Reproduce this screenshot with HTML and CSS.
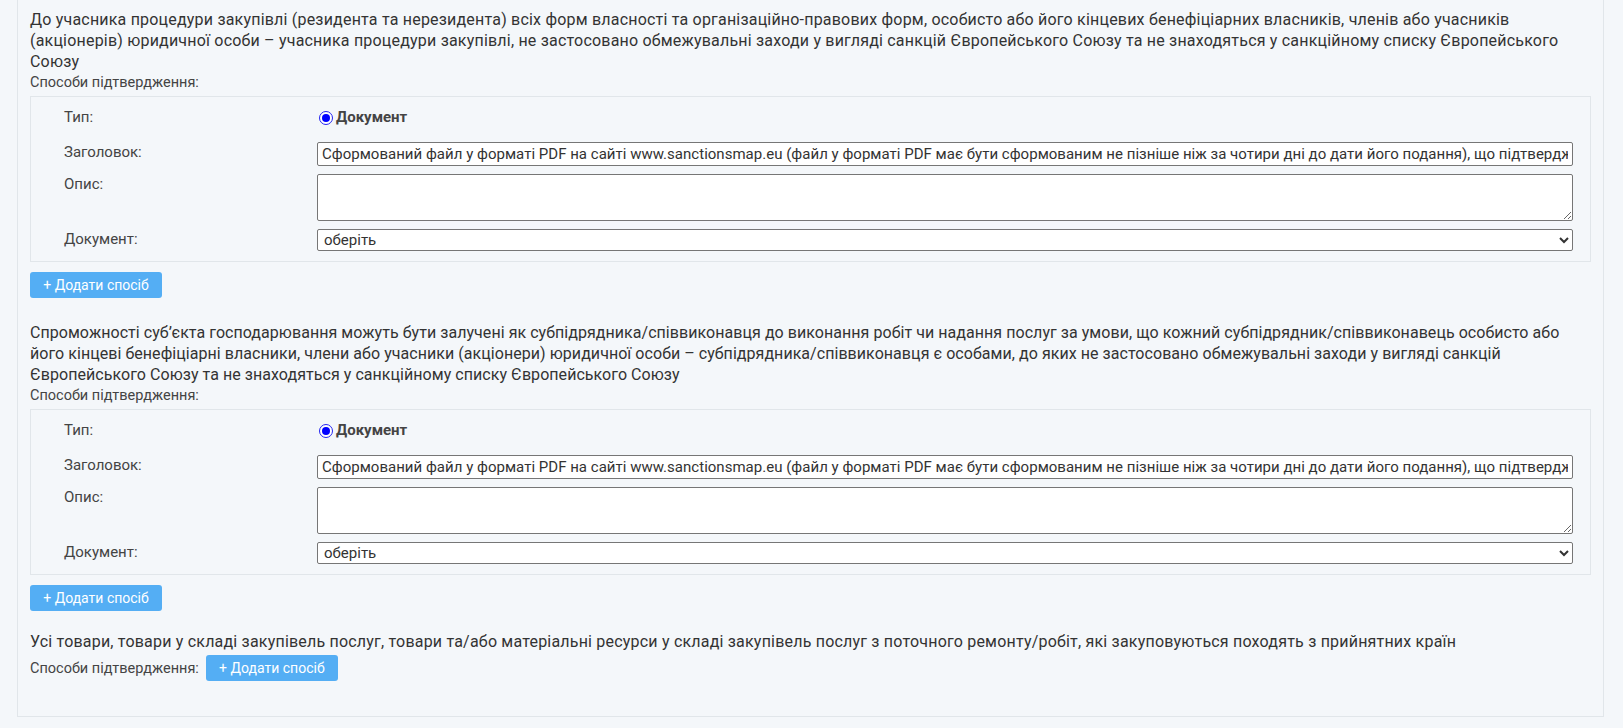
FILE: index.html
```html
<!DOCTYPE html>
<html lang="uk">
<head>
<meta charset="utf-8">
<title>Критерії</title>
<link rel="stylesheet" href="styles.css">
</head>
<body>
<div class="page">
  <div class="panel">
    <section class="criterion">
      <p class="crit-text">До учасника процедури закупівлі (резидента та нерезидента) всіх форм власності та організаційно-правових форм, особисто або його кінцевих бенефіціарних власників, членів або учасників (акціонерів) юридичної особи – учасника процедури закупівлі, не застосовано обмежувальні заходи у вигляді санкцій Європейського Союзу та не знаходяться у санкційному списку Європейського Союзу</p>
      <div class="methods-label">Способи підтвердження:</div>
      <div class="method">
        <div class="row row-type"><span class="lbl">Тип:</span><span class="radio"><span class="radio-mark"></span>Документ</span></div>
        <div class="row"><span class="lbl">Заголовок:</span><input class="field" type="text" value="Сформований файл у форматі PDF на сайті www.sanctionsmap.eu (файл у форматі PDF має бути сформованим не пізніше ніж за чотири дні до дати його подання), що підтверджує відсутність застосування санкцій"></div>
        <div class="row"><span class="lbl">Опис:</span><textarea class="field area"></textarea></div>
        <div class="row"><span class="lbl">Документ:</span><select class="field sel"><option>оберіть</option></select></div>
      </div>
      <button class="add-btn" type="button">+ Додати спосіб</button>
    </section>

    <section class="criterion criterion--tight">
      <p class="crit-text crit-text--tight">Спроможності суб’єкта господарювання можуть бути залучені як субпідрядника/співвиконавця до виконання робіт чи надання послуг за умови, що кожний субпідрядник/співвиконавець особисто або його кінцеві бенефіціарні власники, члени або учасники (акціонери) юридичної особи – субпідрядника/співвиконавця є особами, до яких не застосовано обмежувальні заходи у вигляді санкцій Європейського Союзу та не знаходяться у санкційному списку Європейського Союзу</p>
      <div class="methods-label">Способи підтвердження:</div>
      <div class="method">
        <div class="row row-type"><span class="lbl">Тип:</span><span class="radio"><span class="radio-mark"></span>Документ</span></div>
        <div class="row"><span class="lbl">Заголовок:</span><input class="field" type="text" value="Сформований файл у форматі PDF на сайті www.sanctionsmap.eu (файл у форматі PDF має бути сформованим не пізніше ніж за чотири дні до дати його подання), що підтверджує відсутність застосування санкцій"></div>
        <div class="row"><span class="lbl">Опис:</span><textarea class="field area"></textarea></div>
        <div class="row"><span class="lbl">Документ:</span><select class="field sel"><option>оберіть</option></select></div>
      </div>
      <button class="add-btn" type="button">+ Додати спосіб</button>
    </section>

    <section class="criterion">
      <p class="crit-text">Усі товари, товари у складі закупівель послуг, товари та/або матеріальні ресурси у складі закупівель послуг з поточного ремонту/робіт, які закуповуються походять з прийнятних країн</p>
      <div class="methods-inline">
        <span class="methods-label">Способи підтвердження:</span>
        <button class="add-btn" type="button">+ Додати спосіб</button>
      </div>
    </section>
  </div>
</div>
</body>
</html>
```

FILE: styles.css
```css
html, body {
  margin: 0;
  padding: 0;
  background: #f4f7fa;
}
body {
  font-family: Roboto, "Noto Sans", "Liberation Sans", sans-serif;
  font-size: 16px;
  line-height: 21px;
  color: #333;
}
.page {
  padding: 0 19px 12px 17px;
}
.panel {
  margin-top: -12px;
  border: 1px solid #e1e6ea;
  background: #f4f7fa;
  padding: 20px 12px 11px 12px;
}
.criterion {
  margin-bottom: 24px;
}
.criterion--tight {
  margin-bottom: 20px;
}
.crit-text {
  margin: 0;
  letter-spacing: 0.2px;
}
.crit-text--tight {
  letter-spacing: 0.05px;
}
.methods-label {
  display: block;
  font-size: 14.5px;
  line-height: 21px;
  color: #444;
}
.method {
  margin-top: 3px;
  border: 1px solid #e1e6ea;
  padding: 10px 17px 10px 33px;
}
.row {
  display: grid;
  grid-template-columns: 253px 1fr;
  align-items: start;
  margin-bottom: 8px;
}
.row:last-child {
  margin-bottom: 0;
}
.row-type {
  margin-bottom: 14px;
}
.lbl {
  font-size: 15px;
  line-height: 20px;
  color: #444;
}
.row-type .lbl {
  line-height: 21px;
}
.radio {
  display: flex;
  align-items: center;
  font-weight: bold;
  font-size: 15px;
  color: #444;
  line-height: 21px;
  margin-left: 2px;
}
.radio-mark {
  width: 12px;
  height: 12px;
  border: 1px solid #2424f0;
  border-radius: 50%;
  background: #fff;
  margin-right: 3px;
  position: relative;
}
.radio-mark::after {
  content: "";
  position: absolute;
  left: 2px;
  top: 2px;
  width: 8px;
  height: 8px;
  border-radius: 50%;
  background: #0000ff;
}
.field {
  box-sizing: border-box;
  width: 100%;
  margin: 0;
  font-family: Roboto, "Noto Sans", "Liberation Sans", sans-serif;
  font-size: 15px;
  color: #333;
  background: #fff;
  border: 1px solid #767676;
  border-radius: 2px;
  padding: 1px 4px;
}
input.field {
  height: 24px;
  letter-spacing: 0.02px;
}
.area {
  height: 47px;
  resize: vertical;
  display: block;
}
.sel {
  height: 22px;
  padding: 0 2px;
  font-size: 15px;
}
.add-btn {
  margin-top: 10px;
  height: 26px;
  width: 132px;
  border: 0;
  border-radius: 3px;
  background: #54aef4;
  color: #fff;
  font-family: Roboto, "Noto Sans", "Liberation Sans", sans-serif;
  font-size: 14px;
  padding: 0;
  cursor: pointer;
}
.methods-inline {
  display: flex;
  align-items: center;
  gap: 7px;
  margin-top: 3px;
}
.methods-inline .add-btn {
  margin-top: 0;
}
```
